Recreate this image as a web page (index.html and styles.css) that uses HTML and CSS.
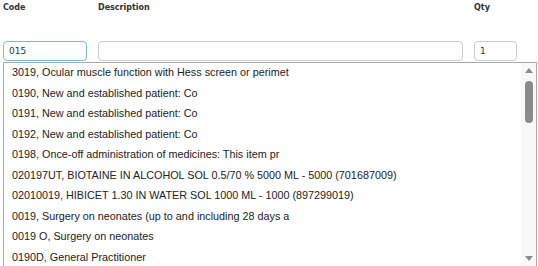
FILE: index.html
```html
<!DOCTYPE html>
<html lang="en">
<head>
    <meta charset="UTF-8">
    <title>Item lookup</title>
    <link rel="stylesheet" href="styles.css">
</head>
<body>
    <div class="form">
        <div class="labels">
            <div class="col-code">Code</div>
            <div class="col-desc">Description</div>
            <div class="col-qty">Qty</div>
        </div>
        <div class="inputs">
            <input type="text" class="col-code field focused" value="015">
            <input type="text" class="col-desc field" value="">
            <input type="text" class="col-qty field" value="1">
        </div>
        <div class="dropdown">
            <ul class="options">
                <li>3019, Ocular muscle function with Hess screen or perimet</li>
                <li>0190, New and established patient: Co</li>
                <li>0191, New and established patient: Co</li>
                <li>0192, New and established patient: Co</li>
                <li>0198, Once-off administration of medicines: This item pr</li>
                <li>020197UT, BIOTAINE IN ALCOHOL SOL 0.5/70 % 5000 ML - 5000 (701687009)</li>
                <li>02010019, HIBICET 1.30 IN WATER SOL 1000 ML - 1000 (897299019)</li>
                <li>0019, Surgery on neonates (up to and including 28 days a</li>
                <li>0019 O, Surgery on neonates</li>
                <li>0190D, General Practitioner</li>
            </ul>
            <div class="scrollbar">
                <span class="arrow up"></span>
                <div class="track"><span class="thumb"></span></div>
                <span class="arrow down"></span>
            </div>
        </div>
    </div>
</body>
</html>
```

FILE: styles.css
```css
body {
    margin: 0;
    background: #fff;
    font-family: "DejaVu Sans", Verdana, sans-serif;
    color: #333;
}
.form {
    padding: 0 1px 0 3px;
}
.labels, .inputs {
    display: flex;
    gap: 11px;
}
.labels {
    font-weight: bold;
    font-size: 8px;
    height: 41px;
    padding-top: 3px;
    box-sizing: border-box;
}
.col-code { width: 84px; }
.col-desc { width: 365px; }
.col-qty { width: 43px; }
.field {
    box-sizing: border-box;
    height: 20px;
    margin: 0;
    padding: 0 5px;
    border: 1px solid #ccc;
    border-radius: 4px;
    font-family: "DejaVu Sans", Verdana, sans-serif;
    font-size: 9px;
    color: #333;
    outline: none;
}
.field.focused {
    border-color: #80b3e6;
}
.dropdown {
    display: flex;
    height: 205px;
    border: 1px solid #aaa;
    box-sizing: border-box;
    margin-top: 1px;
    overflow: hidden;
}
.options {
    flex: 1;
    list-style: none;
    margin: -1px 0 0;
    padding: 0;
    font-family: "Liberation Sans", Arial, sans-serif;
    font-size: 10.8px;
    color: #222;
}
.options li {
    height: 20.5px;
    line-height: 20.5px;
    padding-left: 8px;
    white-space: nowrap;
    overflow: hidden;
}
.scrollbar {
    width: 15px;
    background: #f8f8f8;
    display: flex;
    flex-direction: column;
    align-items: center;
}
.arrow {
    width: 0;
    height: 0;
    border-left: 4px solid transparent;
    border-right: 4px solid transparent;
    margin: 5px 0;
}
.arrow.up { border-bottom: 5px solid #8a8a8a; }
.arrow.down { border-top: 5px solid #8a8a8a; }
.track {
    flex: 1;
    width: 100%;
    display: flex;
    justify-content: center;
}
.thumb {
    width: 8px;
    height: 42px;
    margin-top: 3px;
    border-radius: 4px;
    background: #8a8a8a;
}
```
